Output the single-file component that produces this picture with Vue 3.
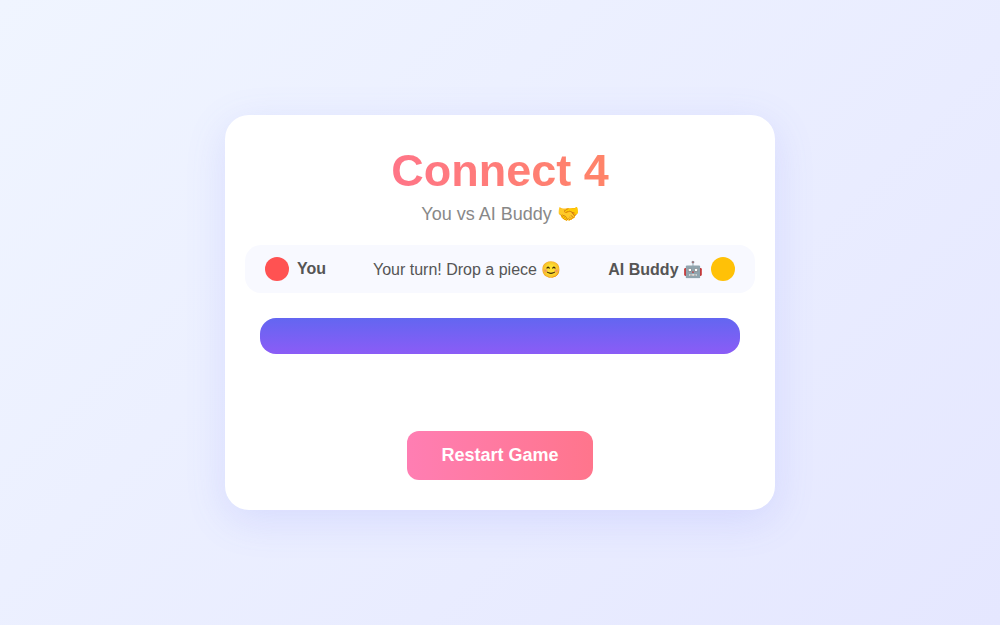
<script setup>
import { ref } from 'vue'

const status = ref('Your turn! Drop a piece 😊')
const board = ref([])

function restart() {
  board.value = []
  status.value = 'Your turn! Drop a piece 😊'
}
</script>

<template>
  <div class="page">
    <main class="card">
      <header class="header">
        <h1 class="title">Connect 4</h1>
        <p class="subtitle">You vs AI Buddy 🤝</p>
      </header>
      <section class="info">
        <div class="player">
          <span class="disc disc-red"></span>
          <span>You</span>
        </div>
        <div class="status" role="status">{{ status }}</div>
        <div class="player">
          <span>AI Buddy 🤖</span>
          <span class="disc disc-yellow"></span>
        </div>
      </section>
      <div class="board">
        <div v-for="(cell, i) in board" :key="i" class="cell"></div>
      </div>
      <div class="message"></div>
      <button class="restart" type="button" @click="restart">Restart Game</button>
    </main>
  </div>
</template>

<style>
body {
  margin: 0;
}
</style>

<style scoped>
.page {
  min-height: 100vh;
  box-sizing: border-box;
  padding: 20px;
  display: flex;
  align-items: center;
  justify-content: center;
  background: linear-gradient(135deg, #f0f5ff, #e5e7ff);
  font-family: "Liberation Sans", Arial, sans-serif;
}

.card {
  width: 100%;
  max-width: 550px;
  box-sizing: border-box;
  padding: 30px 20px;
  border-radius: 24px;
  background: #fff;
  box-shadow: 0 10px 40px rgba(99, 110, 250, 0.15);
  text-align: center;
}

.header {
  margin-bottom: 20px;
}

.title {
  margin: 0 0 8px;
  font-size: 45px;
  line-height: 51px;
  background: linear-gradient(90deg, #ff6b9d, #ff8e53);
  background-clip: text;
  -webkit-background-clip: text;
  color: transparent;
}

.subtitle {
  margin: 0;
  font-size: 18px;
  line-height: 21px;
  color: #888;
}

.info {
  display: flex;
  align-items: center;
  justify-content: space-between;
  padding: 12px 20px;
  margin-bottom: 25px;
  border-radius: 16px;
  background: #f8f9ff;
  font-size: 16px;
  line-height: normal;
  color: #555;
}

.player {
  display: flex;
  align-items: center;
  gap: 8px;
  font-weight: 700;
}

.disc {
  width: 24px;
  height: 24px;
  border-radius: 50%;
}

.disc-red {
  background: #ff5252;
}

.disc-yellow {
  background: #ffc107;
}

.board {
  display: grid;
  grid-template-columns: repeat(7, 1fr);
  gap: 10px;
  max-width: 480px;
  box-sizing: border-box;
  margin: 0 auto 25px;
  padding: 18px;
  border-radius: 16px;
  background: linear-gradient(180deg, #6366f1, #8b5cf6);
}

.cell {
  aspect-ratio: 1;
  border-radius: 50%;
  background: #fff;
}

.message {
  min-height: 32px;
  margin-bottom: 20px;
}

.restart {
  padding: 14px 34px;
  border: none;
  border-radius: 12px;
  background: linear-gradient(90deg, #ff7eb3, #ff758c);
  color: #fff;
  font: 700 18px/21px "Liberation Sans", Arial, sans-serif;
  cursor: pointer;
}
</style>
